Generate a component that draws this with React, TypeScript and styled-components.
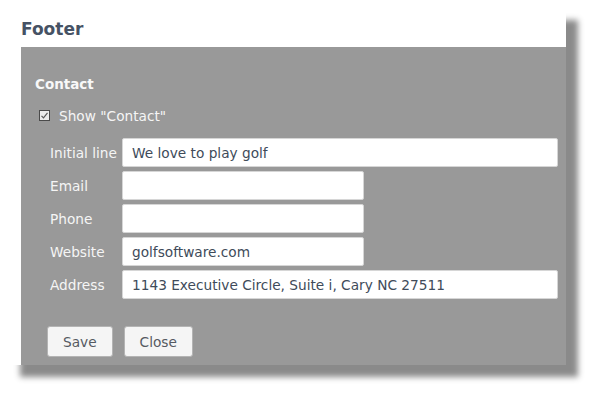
import styled, { createGlobalStyle } from "styled-components";

const GlobalStyle = createGlobalStyle`
  html, body {
    margin: 0;
    padding: 0;
    background: #ffffff;
  }
  body {
    font-family: "DejaVu Sans", Verdana, sans-serif;
  }
`;

const Page = styled.div`
  padding: 8px;
  width: 600px;
  height: 400px;
  box-sizing: border-box;
`;

const Card = styled.div`
  width: 558px;
  height: 357px;
  background: #ffffff;
  box-shadow: 12px 12px 6px rgba(0, 0, 0, 0.46);
  padding-left: 13px;
  box-sizing: border-box;
  display: flex;
  flex-direction: column;
`;

const Title = styled.h2`
  margin: 0;
  padding: 11px 0 8px;
  font-size: 17px;
  line-height: 20px;
  font-weight: bold;
  color: #465264;
`;

const Panel = styled.div`
  flex: 1;
  background: #999999;
  padding: 29px 8px 8px 14px;
  display: flex;
  flex-direction: column;
`;

const SectionTitle = styled.h3`
  margin: 0;
  font-size: 13.5px;
  line-height: 16px;
  font-weight: bold;
  color: #f8f8f8;
`;

const CheckRow = styled.label`
  display: flex;
  align-items: center;
  gap: 9px;
  margin-top: 16px;
  padding-left: 4px;
  font-size: 13.7px;
  line-height: 16px;
  color: #f5f5f5;
`;

const CheckBox = styled.span`
  width: 11px;
  height: 11px;
  box-sizing: border-box;
  border: 1px solid #4a4a4a;
  background: #ececec;
  display: flex;
  align-items: center;
  justify-content: center;
  margin-top: -2px;
`;

const Fields = styled.div`
  display: flex;
  flex-direction: column;
  gap: 4px;
  margin-top: 14px;
`;

const FieldRow = styled.div`
  display: flex;
  align-items: center;
  padding-left: 15px;
`;

const FieldLabel = styled.span`
  width: 72px;
  font-size: 13.7px;
  color: #f5f5f5;
  white-space: nowrap;
`;

const TextInput = styled.input<{ $wide?: boolean }>`
  width: ${(p) => (p.$wide ? "436px" : "242px")};
  height: 29px;
  box-sizing: border-box;
  border: 1px solid #d6d6d6;
  border-radius: 2px;
  background: #ffffff;
  padding: 0 9px;
  font-family: "DejaVu Sans", Verdana, sans-serif;
  font-size: 13.7px;
  color: #404b5a;
  outline: none;
`;

const Actions = styled.div`
  display: flex;
  gap: 11px;
  margin-top: 27px;
  padding-left: 12px;
`;

const Button = styled.button`
  height: 31px;
  padding: 0 15px;
  border: 1px solid #b4b4b4;
  border-radius: 3px;
  background: #f5f5f5;
  font-family: "DejaVu Sans", Verdana, sans-serif;
  font-size: 13.7px;
  color: #555a62;
  cursor: pointer;
`;

const fields = [
  { label: "Initial line", value: "We love to play golf", wide: true },
  { label: "Email", value: "", wide: false },
  { label: "Phone", value: "", wide: false },
  { label: "Website", value: "golfsoftware.com", wide: false },
  { label: "Address", value: "1143 Executive Circle, Suite i, Cary NC 27511", wide: true },
];

const App = () => {
  return (
    <Page>
      <GlobalStyle />
      <Card>
        <Title>Footer</Title>
        <Panel>
          <SectionTitle>Contact</SectionTitle>
          <CheckRow>
            <CheckBox>
              <svg width="9" height="9" viewBox="0 0 9 9">
                <path d="M1.5 4.8 L3.5 6.8 L7.5 1.8" fill="none" stroke="#5a5a5a" strokeWidth="1.2" />
              </svg>
            </CheckBox>
            Show "Contact"
          </CheckRow>
          <Fields>
            {fields.map((f) => (
              <FieldRow key={f.label}>
                <FieldLabel>{f.label}</FieldLabel>
                <TextInput $wide={f.wide} defaultValue={f.value} />
              </FieldRow>
            ))}
          </Fields>
          <Actions>
            <Button>Save</Button>
            <Button>Close</Button>
          </Actions>
        </Panel>
      </Card>
    </Page>
  );
};

export default App;
